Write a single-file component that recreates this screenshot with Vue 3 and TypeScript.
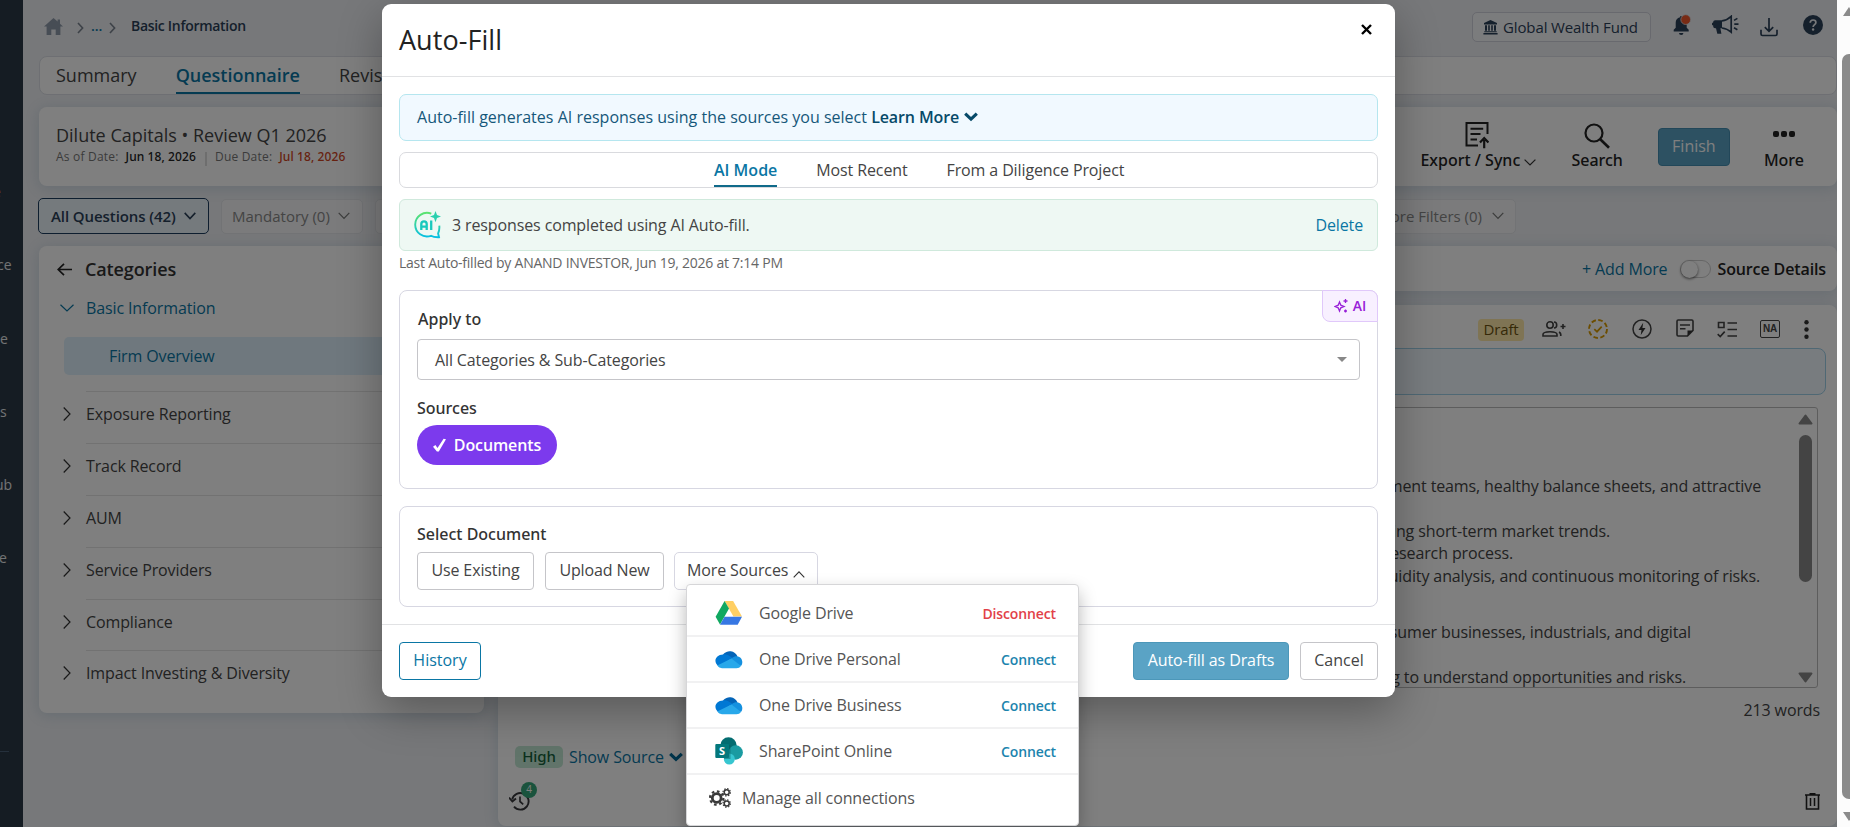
<script setup lang="ts">
interface Source {
  name: string
  icon: 'gdrive' | 'onedrive' | 'sharepoint'
  action: string
}

interface EditorLine {
  text: string
  top: number
  right: number
}

const railLabels: { text: string; top: number; left: number }[] = [
  { text: 'e', top: 182, left: -7 },
  { text: 'ce', top: 255, left: -3 },
  { text: 'e', top: 329, left: 0 },
  { text: 's', top: 402, left: 0 },
  { text: 'ub', top: 475, left: -5 },
  { text: 'e', top: 548, left: -1 },
]

const categories: string[] = [
  'Exposure Reporting',
  'Track Record',
  'AUM',
  'Service Providers',
  'Compliance',
  'Impact Investing & Diversity',
]

const editorLines: EditorLine[] = [
  { text: 'ment teams, healthy balance sheets, and attractive', top: 67, right: 56 },
  { text: 'ing short-term market trends.', top: 22, right: 207 },
  { text: 'research process.', top: 0, right: 304 },
  { text: 'uidity analysis, and continuous monitoring of risks.', top: 0, right: 57 },
  { text: 'sumer businesses, industrials, and digital', top: 33, right: 126 },
  { text: 'g to understand opportunities and risks.', top: 23, right: 131 },
]

const modes: string[] = ['AI Mode', 'Most Recent', 'From a Diligence Project']

const sources: Source[] = [
  { name: 'Google Drive', icon: 'gdrive', action: 'Disconnect' },
  { name: 'One Drive Personal', icon: 'onedrive', action: 'Connect' },
  { name: 'One Drive Business', icon: 'onedrive', action: 'Connect' },
  { name: 'SharePoint Online', icon: 'sharepoint', action: 'Connect' },
]
</script>

<template>
  <div class="app">
    <nav class="rail">
      <span
        v-for="(label, i) in railLabels"
        :key="i"
        class="rail-label"
        :class="{ hot: i === 0 }"
        :style="{ top: label.top + 'px', left: label.left + 'px' }"
      >{{ label.text }}</span>
      <i class="rail-line"></i>
    </nav>

    <main class="page">
      <header class="topbar">
        <div class="crumbs">
          <svg class="home" width="19" height="17" viewBox="0 0 19 17"><path d="M9.5 0 0 8.6h2.6V17h4.7v-5.6h4.4V17h4.7V8.6H19l-3-2.8V1.6h-2.4v2z" fill="#8f9bab" /></svg>
          <svg class="c1" width="7" height="12" viewBox="0 0 7 12"><path d="M1 1l4.6 5L1 11" class="crumb-arrow" /></svg>
          <span class="dots">...</span>
          <svg class="c2" width="7" height="12" viewBox="0 0 7 12"><path d="M1 1l4.6 5L1 11" class="crumb-arrow" /></svg>
          <span class="here">Basic Information</span>
        </div>
        <div class="tools">
          <div class="fund">
            <svg width="15" height="15" viewBox="0 0 15 15"><path d="M7.5 0 14 3v1.4H1V3zM2 5.2h2v5.6H2zM5.2 5.2h1.6v5.6H5.2zM8.2 5.2h1.6v5.6H8.2zM11 5.2h2v5.6h-2zM1.3 11.3h12.4v1H1.3zM.4 12.9h14.2v1.5H.4z" fill="#2b4058" /></svg>
            <span>Global Wealth Fund</span>
          </div>
          <svg class="bell" width="20" height="22" viewBox="0 0 20 22"><path d="M1.7 17.5v-1.8l2-2V8.8A5.6 5.6 0 0 1 8 3.3V2.2h2.4v1.1a5.6 5.6 0 0 1 4.3 5.5v4.9l2 2v1.8zM7 19h4.4a2.2 2 0 0 1-4.4 0z" fill="#2b4058" /><circle cx="13.7" cy="5.6" r="4.9" fill="#f0562b" stroke="#dfe2e8" stroke-width=".8" /></svg>
          <svg class="horn" width="27" height="20" viewBox="0 0 27 20"><path d="M1.2 7.2c0-1.3.8-2 2-2H10v8H8.4l1 5.6H5.3L4 13.2h-.8c-1.2 0-2-.7-2-2v-.6L0 10V8.300z" fill="#2b4058" /><path d="M10 5.8c3.600-.4 6.500-1.900 9.200-4.500v15.800c-2.700-2.400-5.600-3.700-9.200-4.100" fill="none" stroke="#2b4058" stroke-width="1.700" /><path d="M22 5.400l3.400-2M22.300 9.100h4.200M22 12.800l3.400 2" fill="none" stroke="#2b4058" stroke-width="1.600" /></svg>
          <svg class="load" width="18" height="19" viewBox="0 0 18 19"><path d="M1 11.800v4.200c0 1 .5 1.500 1.500 1.500h13c1 0 1.500-.5 1.500-1.500v-4.200M9 0v13M4.800 9.200 9 13.300l4.200-4.100" fill="none" stroke="#2b4058" stroke-width="1.700" /></svg>
          <svg class="help" width="20" height="20" viewBox="0 0 20 20"><circle cx="10" cy="10" r="10" fill="#2b4058" /><path d="M7.200 7.700c.1-1.700 1.200-2.700 2.900-2.700s2.800.9 2.800 2.400c0 2.200-2.800 2.200-2.800 4.600" fill="none" stroke="#eef0f4" stroke-width="1.700" /><circle cx="10.100" cy="14.500" r="1.200" fill="#eef0f4" /></svg>
        </div>
      </header>

      <div class="tabs">
        <span class="tab">Summary</span>
        <span class="tab active">Questionnaire</span>
        <span class="tab">Revis</span>
      </div>

      <section class="project card">
        <div class="project-info">
          <div class="project-title">Dilute Capitals • Review Q1 2026</div>
          <div class="dates">
            <span>As of Date:</span><b>Jun 18, 2026</b><i></i><span>Due Date:</span><b class="due">Jul 18, 2026</b>
          </div>
        </div>
        <div class="actions">
          <div class="action export">
            <svg width="24" height="27" viewBox="0 0 24 27"><path d="M22.500 12V1.100H1.500v22.400H13M5.500 6.800h12.700M5.500 12h10M5.500 17.400h6.500" fill="none" stroke="#222" stroke-width="2" /><path d="M19.200 26.300V18M15 20.500l4.200-4.500 4.200 4.500" fill="none" stroke="#222" stroke-width="2.200" /></svg>
            <span>Export / Sync <svg width="12" height="7" viewBox="0 0 12 7"><path d="M.6.6 6 6 11.400.6" fill="none" stroke="#333" stroke-width="1.200" /></svg></span>
          </div>
          <div class="action search">
            <svg width="26" height="26" viewBox="0 0 26 26"><circle cx="10" cy="10" r="8.500" fill="none" stroke="#222" stroke-width="2.200" /><path d="M16 16l9 8.800" stroke="#222" stroke-width="2.600" /></svg>
            <span>Search</span>
          </div>
          <button class="finish">Finish</button>
          <div class="action more">
            <svg width="22" height="6" viewBox="0 0 22 6"><rect width="6" height="6" rx="2" /><rect x="8" width="6" height="6" rx="2" /><rect x="16" width="6" height="6" rx="2" /></svg>
            <span>More</span>
          </div>
        </div>
      </section>

      <div class="filters">
        <div class="filter selected">All Questions (42)<svg width="12" height="8" viewBox="0 0 12 8"><path d="M.7.9 6 6.500 11.300.9" /></svg></div>
        <div class="filter mandatory">Mandatory (0)<svg width="12" height="8" viewBox="0 0 12 8"><path d="M.7.9 6 6.500 11.300.9" /></svg></div>
        <div class="filter wide">ore Filters (0)<svg width="12" height="8" viewBox="0 0 12 8"><path d="M.7.9 6 6.500 11.300.9" /></svg></div>
      </div>

      <div class="columns">
        <aside class="card categories">
          <div class="cat-head">
            <svg width="15" height="13" viewBox="0 0 15 13"><path d="M7 .8 1.200 6.500 7 12.200M1.200 6.500H15" fill="none" stroke="#222" stroke-width="1.700" /></svg>
            Categories
          </div>
          <div class="cat-open">
            <svg width="14" height="8" viewBox="0 0 14 8"><path d="M.5.700 7 7 13.500.7" fill="none" stroke="#0a76a4" stroke-width="1.200" /></svg>
            Basic Information
          </div>
          <div class="cat-sub">Firm Overview</div>
          <div v-for="c in categories" :key="c" class="cat-row">
            <svg width="8" height="14" viewBox="0 0 8 14"><path d="M.7.500 7 7 .7 13.500" fill="none" stroke="#333" stroke-width="1.200" /></svg>
            <div class="cat-name">{{ c }}</div>
          </div>
        </aside>

        <div class="answers">
          <div class="card addbar">
            <span class="add">+ Add More</span>
            <span class="toggle"><i></i></span>
            <b>Source Details</b>
          </div>
          <div class="card question">
            <div class="q-tools">
              <span class="draft">Draft</span>
              <svg class="people" width="24" height="17" viewBox="0 0 24 17"><g fill="none" stroke="#444" stroke-width="1.600"><circle cx="8" cy="4" r="3.200" /><path d="M12 1c3.600 0 3.600 6 0 6M1 15v-1.500C1 9.800 15 9.800 15 13.500V15zM17 11c1.800.8 2 2 1.800 4M18.500 5.500h5M21 3v5" /></g></svg>
              <svg class="status" width="20" height="20" viewBox="0 0 20 20"><circle cx="10" cy="10" r="9" fill="none" stroke="#d99b00" stroke-width="1.900" stroke-dasharray="4.600 2.470" /><path d="M6.300 10.200 9 12.700l4.700-5" fill="none" stroke="#d99b00" stroke-width="1.700" /></svg>
              <svg class="bolt" width="20" height="20" viewBox="0 0 20 20"><circle cx="10" cy="10" r="9" fill="none" stroke="#444" stroke-width="1.500" /><path d="M11.200 3.800 6.500 11h3l-.8 5.300L13.500 9h-3.100z" fill="#333" /></svg>
              <svg class="note" width="18" height="18" viewBox="0 0 18 18"><path d="M11.500 17H2.200Q1 17 1 15.800V2.200Q1 1 2.200 1h13.600Q17 1 17 2.200v9.300z" fill="none" stroke="#444" stroke-width="1.600" /><path d="M4 6h10M4 9.700h5.500" stroke="#444" stroke-width="1.600" /><path d="M11.500 17v-5.500H17z" fill="#333" /></svg>
              <svg class="checks" width="20" height="17" viewBox="0 0 20 17"><path d="M1.500 1.500H7v5H1.500zM10.500 2H20M10.500 8.500H20M10.500 15H20M.7 13.200l2.500 2.400 4.500-5" fill="none" stroke="#444" stroke-width="1.600" /></svg>
              <span class="na">NA</span>
              <svg class="kebab" width="5" height="19" viewBox="0 0 5 19"><circle cx="2.500" cy="2.300" r="2.200" /><circle cx="2.500" cy="9.500" r="2.200" /><circle cx="2.500" cy="16.700" r="2.200" /></svg>
            </div>
            <div class="prompt"></div>
            <div class="editor">
              <div class="editor-text">
                <div
                  v-for="line in editorLines"
                  :key="line.text"
                  class="line"
                  :style="{ marginTop: line.top + 'px', marginRight: line.right + 'px' }"
                >{{ line.text }}</div>
              </div>
              <div class="scroll">
                <svg width="15" height="11" viewBox="0 0 15 11"><path d="M7.500 1.500 13.500 9.500H1.500z" class="tri" /></svg>
                <i></i>
                <svg class="down" width="15" height="11" viewBox="0 0 15 11"><path d="M7.500 9.500 13.500 1.500H1.500z" class="tri" /></svg>
              </div>
            </div>
            <div class="words">213 words</div>
            <div class="source-row">
              <span class="high">High</span>
              <span class="show">Show Source</span>
              <svg width="14" height="10" viewBox="0 0 14 10"><path d="M1.200 1.800 7 7.400l5.800-5.600" fill="none" stroke="#006a99" stroke-width="3.200" /></svg>
            </div>
            <div class="bottom-row">
              <span class="history-icon">
                <svg width="21" height="20" viewBox="0 0 21 20"><path d="M3.200 8.500A8.300 8.300 0 1 1 5 15.700" fill="none" stroke="#38383c" stroke-width="1.900" /><path d="M0 6.600 3.400 10.500 7 7.500" fill="none" stroke="#38383c" stroke-width="1.900" /><path d="M11 5.500v5l3.200 2.800" fill="none" stroke="#38383c" stroke-width="1.700" /></svg>
                <em>4</em>
              </span>
              <svg width="15" height="17" viewBox="0 0 15 17"><path d="M0 2h15M1.500 2v14h12V2M4.500.800h6" fill="none" stroke="#222" stroke-width="1.600" /><path d="M5.500 5v8M9.500 5v8" stroke="#222" stroke-width="1.500" /></svg>
            </div>
          </div>
        </div>
      </div>
    </main>

    <div class="backdrop">
      <div class="modal">
        <header class="modal-head">
          <h1>Auto-Fill</h1>
          <svg width="11" height="11" viewBox="0 0 11 11"><path d="M1 1l9 9M10 1l-9 9" stroke="#000" stroke-width="2.400" /></svg>
        </header>
        <div class="modal-body">
          <div class="info">Auto-fill generates AI responses using the sources you select <b>Learn More</b>
            <svg width="14" height="10" viewBox="0 0 14 10"><path d="M1.200 1.600 7 7.200l5.800-5.600" fill="none" stroke="#074a69" stroke-width="3.100" /></svg>
          </div>
          <div class="modes">
            <span v-for="(m, i) in modes" :key="m" :class="{ on: i === 0 }">{{ m }}</span>
          </div>
          <div class="done">
            <svg width="27" height="28" viewBox="0 0 27 28">
              <defs><linearGradient id="aiGrad" x1="0" y1="0" x2="0" y2="1" gradientUnits="objectBoundingBox"><stop offset="0" stop-color="#5be36f" /><stop offset="1" stop-color="#06bfe3" /></linearGradient></defs>
              <path d="M17.300 2.700A11.800 11.800 0 1 0 17 24.800c2 1.200 4.500 1.500 8 1.400l-.9-3.800c1-2 1.500-4.500 1.200-7.700" fill="none" stroke="url(#aiGrad)" stroke-width="1.900" />
              <path d="M7.300 19V13q0-2.700 2.700-2.700t2.700 2.700v6M7.300 15.600h5.400M17.200 9.500V19" fill="none" stroke="#17c9bd" stroke-width="2.300" />
              <path d="M21.500 0l1.500 3.900 4 1.600-4 1.600-1.500 4.100L20 7.100l-4-1.600 4-1.600z" fill="#2ad0ae" />
            </svg>
            <span>3 responses completed using AI Auto-fill.</span>
            <a>Delete</a>
          </div>
          <div class="last">Last Auto-filled by ANAND INVESTOR, Jun 19, 2026 at 7:14 PM</div>

          <section class="box apply">
            <div class="ai-badge">
              <svg width="14" height="14" viewBox="0 0 14 14"><path d="M5.500 3 6.800 6.200 10 7.500 6.800 8.800 5.500 12 4.200 8.800 1 7.500 4.200 6.200zM11.500 0v4M9.500 2h4M11.500 10.500v3M10 12h3" fill="none" stroke="#9820d8" stroke-width="1.300" /></svg>AI
            </div>
            <label class="apply-label">Apply to</label>
            <div class="select">All Categories &amp; Sub-Categories<i></i></div>
            <label>Sources</label>
            <span class="pill"><svg width="13" height="14" viewBox="0 0 13 14"><path d="M0 8.800 2.400 7l2.100 3L10.600.8 13 1.200 5.800 13.400H3.900z" fill="#fff" /></svg>Documents</span>
          </section>

          <section class="box pick">
            <label>Select Document</label>
            <div class="btns">
              <button>Use Existing</button>
              <button>Upload New</button>
              <div class="more-sources">
                More Sources <svg width="12" height="7" viewBox="0 0 12 7"><path d="M.7 6.300 6 .9l5.300 5.400" fill="none" stroke="#333" stroke-width="1.100" /></svg>
                <div class="menu">
                  <div v-for="s in sources" :key="s.name" class="menu-row">
                    <svg v-if="s.icon === 'gdrive'" width="28" height="26" viewBox="0 0 28 26"><path d="M9.600 1h8.500L27 16.400h-8.600z" fill="#ffcf63" /><path d="M9.600 1 14 8.500 5 24.500.6 16.800z" fill="#11a861" /><path d="M9.500 16.700H27l-4.300 8H5z" fill="#3777e3" /></svg>
                    <svg v-else-if="s.icon === 'onedrive'" width="28" height="20" viewBox="0 0 28 20"><path d="M8 5.500a8.500 8.500 0 0 1 14.500 2L17 12z" fill="#0364b8" /><path d="M8 5.500C11 4.800 14 6.600 17.500 9L4 17.500C-2.500 13 .5 5.800 8 5.500z" fill="#0078d4" /><path d="M17 9c3-2.500 7.500-2.400 9.500 1 1.500 3 .8 5.500-.5 7L13 12z" fill="#1490df" /><path d="M16.500 9.500 26 17q-1.500 2.200-4.500 2.300H7Q4 19 2.200 16.600z" fill="#28a8ea" /></svg>
                    <svg v-else width="28" height="28" viewBox="0 0 28 28"><circle cx="13.500" cy="8.500" r="8.200" fill="#036c70" /><circle cx="20.700" cy="15.500" r="7.200" fill="#1a9ba1" /><circle cx="14.300" cy="22" r="5.500" fill="#37c6d0" /><rect x="9" y="8" width="6.500" height="14" fill="#045b5f" opacity=".45" /><rect x=".3" y="7" width="13.700" height="14" rx="1" fill="#03787c" /><text x="7" y="18.200" class="sp">S</text></svg>
                    <span>{{ s.name }}</span>
                    <a :class="{ off: s.action === 'Disconnect' }">{{ s.action }}</a>
                  </div>
                  <div class="menu-row manage">
                    <svg width="22" height="20" viewBox="0 0 22 20"><g fill="none" stroke="#3a3a3a"><circle cx="7.700" cy="10" r="4.400" stroke-width="2.800" /><circle cx="7.700" cy="10" r="6.700" stroke-width="2.200" stroke-dasharray="2.630 2.630" /><circle cx="17.700" cy="4.300" r="2.500" stroke-width="1.500" /><circle cx="17.700" cy="4.300" r="3.700" stroke-width="1.200" stroke-dasharray="1.450 1.450" /><circle cx="17.700" cy="15.500" r="2.500" stroke-width="1.500" /><circle cx="17.700" cy="15.500" r="3.700" stroke-width="1.200" stroke-dasharray="1.450 1.450" /></g></svg>
                    <span>Manage all connections</span>
                  </div>
                </div>
              </div>
            </div>
          </section>
        </div>
        <footer class="modal-foot">
          <button class="hist">History</button>
          <button class="primary">Auto-fill as Drafts</button>
          <button>Cancel</button>
        </footer>
      </div>
    </div>

    <div class="page-scroll">
      <svg width="13" height="11" viewBox="0 0 13 11"><path d="M12 0 18 9H6z" class="ptri" /></svg>
      <i></i>
      <svg width="13" height="11" viewBox="0 0 13 11"><path d="M12 10 18 1H6z" class="ptri" /></svg>
    </div>
  </div>
</template>

<style>
html,
body {
  margin: 0;
  overflow: hidden;
}
</style>

<style scoped>
* {
  box-sizing: border-box;
}
.app {
  display: flex;
  width: 1850px;
  height: 827px;
  overflow: hidden;
  position: relative;
  background: #eef0f4;
  font-family: 'Open Sans', 'Noto Sans', sans-serif;
  font-size: 16px;
  line-height: 22px;
  letter-spacing: -0.12px;
  color: #444;
}
svg {
  flex: none;
  display: block;
}
.rail {
  position: relative;
  width: 23px;
  flex: none;
  background: #2a3846;
  overflow: hidden;
}
.rail-label {
  position: absolute;
  font-size: 14px;
  line-height: 20px;
  letter-spacing: 0;
  color: #e4e6e8;
}
.rail-label.hot {
  color: #e5a03c;
}
.rail-line {
  position: absolute;
  top: 751px;
  left: 0;
  width: 9px;
  height: 1px;
  background: #4a6078;
}
.page {
  width: 1814px;
  flex: none;
  padding-left: 16px;
  display: flex;
  flex-direction: column;
}
.topbar {
  height: 56px;
  flex: none;
  display: flex;
  justify-content: space-between;
}
.crumbs {
  display: flex;
  padding: 18px 0 0 5px;
  align-items: flex-start;
  line-height: 16px;
}
.crumb-arrow {
  fill: none;
  stroke: #7b8490;
  stroke-width: 1.6;
}
.c1 {
  margin: 4px 7px 0 14px;
}
.c2 {
  margin: 4px 0 0 7px;
}
.dots {
  width: 11px;
  font-size: 14px;
  color: #0a76a4;
  font-weight: 600;
}
.here {
  margin-left: 15px;
  font-size: 14px;
  font-weight: 600;
  letter-spacing: -0.3px;
  color: #2b4058;
}
.tools {
  display: flex;
  align-items: flex-start;
  padding-right: 14px;
}
.fund {
  margin-top: 12px;
  width: 179px;
  height: 30px;
  border: 1px solid #d0d2dc;
  border-radius: 5px;
  background: #f7f8fa;
  display: flex;
  align-items: center;
  padding-left: 10px;
  gap: 5px;
  font-size: 15px;
  color: #2b4058;
  white-space: nowrap;
}
.bell {
  margin: 14px 0 0 21px;
}
.horn {
  margin: 15px 0 0 20px;
}
.load {
  margin: 18px 0 0 21px;
}
.help {
  margin: 15px 0 0 25px;
}
.tabs {
  height: 39px;
  flex: none;
  background: #fff;
  border: 1px solid #dcdfe6;
  border-radius: 8px;
  display: flex;
  padding-left: 16px;
  font-size: 18px;
  line-height: 37px;
  letter-spacing: 0;
}
.tab {
  margin-right: 39px;
}
.tab.active {
  color: #0a76a4;
  font-weight: 600;
  border-bottom: 2px solid #0a76a4;
}
.card {
  background: #fff;
  border-radius: 8px;
  box-shadow: 0 2px 14px rgba(80, 130, 165, 0.22);
}
.project {
  margin-top: 12px;
  height: 79px;
  flex: none;
  display: flex;
  justify-content: space-between;
}
.project-info {
  padding: 16px 0 0 17px;
}
.project-title {
  font-size: 18px;
  line-height: 25px;
  letter-spacing: 0;
}
.dates {
  display: flex;
  font-size: 12px;
  line-height: 18px;
  color: #777;
  letter-spacing: 0.2px;
}
.dates b {
  font-weight: 500;
  font-family: 'Noto Sans', sans-serif;
  letter-spacing: 0.1px;
  color: #222;
  margin-left: 7px;
}
.dates b.due {
  color: #cf4421;
}
.dates i {
  width: 2px;
  height: 14px;
  margin: 4px 8px 0 9px;
  background: #ddd;
}
.actions {
  display: flex;
  color: #222;
  font-weight: 500;
  font-family: 'Noto Sans', sans-serif;
  letter-spacing: 0;
}
.action {
  display: flex;
  flex-direction: column;
  align-items: center;
  white-space: nowrap;
}
.action span {
  position: relative;
}
.export {
  margin-right: 35px;
  padding-top: 15px;
}
.export > svg {
  margin-left: -2px;
}
.export span svg {
  display: inline-block;
}
.search {
  padding-top: 16px;
  margin-right: 35px;
}
.finish {
  margin-top: 21px;
  width: 72px;
  height: 38px;
  border: 1px solid #458fb2;
  border-radius: 4px;
  background: #5aa3c5;
  color: #fff;
  font-family: 'Open Sans', sans-serif;
  font-weight: 400;
  margin-right: 34px;
}
.more {
  padding-top: 24px;
  margin-right: 33px;
}
.more svg {
  margin-bottom: 12px;
  fill: #222;
}
.filters {
  margin-top: 12px;
  height: 36px;
  flex: none;
  display: flex;
  align-items: center;
  font-size: 15px;
  letter-spacing: 0;
}
.filter {
  height: 35px;
  border: 1px solid #e4e6ea;
  border-radius: 5px;
  background: #f6f7f8;
  display: flex;
  align-items: center;
  justify-content: space-between;
  padding: 0 12px 0 10px;
  color: #888;
  white-space: nowrap;
  margin-right: 12px;
}
.filter path {
  fill: none;
  stroke: #777;
  stroke-width: 1.2;
}
.filter.selected {
  margin-left: -1px;
  width: 171px;
  height: 36px;
  padding-left: 12px;
  border-color: #1d3c5e;
  background: #eaf5fb;
  color: #2b4058;
  font-weight: 600;
  letter-spacing: -0.08px;
}
.filter.selected path {
  stroke: #2b4058;
  stroke-width: 1.6;
}
.mandatory {
  width: 142px;
}
.wide {
  width: 1141px;
  justify-content: flex-end;
  gap: 10px;
  padding-right: 11px;
}
.columns {
  flex: 1;
  margin-top: 12px;
  display: flex;
  gap: 14px;
  min-height: 0;
}
.categories {
  width: 445px;
  height: 467px;
}
.cat-head {
  display: flex;
  align-items: center;
  gap: 13px;
  padding: 11px 0 0 18px;
  font-size: 18px;
  font-weight: 600;
  color: #333;
  line-height: 24px;
}
.cat-open {
  display: flex;
  align-items: center;
  gap: 12px;
  margin-top: 16px;
  padding-left: 21px;
  color: #0a76a4;
}
.cat-sub {
  margin: 18px 15px 16px 25px;
  height: 38px;
  line-height: 38px;
  padding-left: 45px;
  border-radius: 5px;
  background: #dff1fc;
  color: #0a76a4;
}
.cat-row {
  display: flex;
  gap: 15px;
  margin-left: 24px;
  height: 51.9px;
  align-items: center;
}
.cat-name {
  flex: 1;
  height: 100%;
  line-height: 45px;
  border-top: 1px solid #e4e4e4;
}
.cat-row svg {
  margin-top: -6px;
}
.answers {
  flex: 1;
  display: flex;
  flex-direction: column;
}
.addbar {
  height: 45px;
  flex: none;
  display: flex;
  align-items: center;
  justify-content: flex-end;
  padding-right: 11px;
  white-space: nowrap;
  color: #222;
}
.addbar b {
  font-weight: 600;
}
.add {
  color: #0a76a4;
}
.toggle {
  width: 31px;
  height: 18px;
  border: 1px solid #ccc;
  border-radius: 9px;
  margin: 0 6px 0 13px;
}
.toggle i {
  display: block;
  width: 17px;
  height: 17px;
  border-radius: 50%;
  background: #fff;
  box-shadow: 0 1px 3px rgba(0, 0, 0, 0.6);
}
.question {
  margin-top: 14px;
  height: 521px;
  flex: none;
}
.q-tools {
  height: 43px;
  display: flex;
  justify-content: flex-end;
  align-items: center;
  padding: 5px 28px 0 0;
}
.draft {
  width: 46px;
  height: 22px;
  line-height: 21px;
  margin-top: 1px;
  text-align: center;
  border-radius: 4px;
  background: #ffe9a8;
  color: #6c5310;
  font-size: 15px;
}
.people {
  margin-left: 18px;
}
.status {
  margin-left: 22px;
}
.bolt {
  margin-left: 24px;
}
.note {
  margin-left: 24px;
  margin-top: -2px;
}
.checks {
  margin-left: 23px;
}
.na {
  margin: -1px 0 0 23px;
  width: 20px;
  height: 18px;
  border: 1.5px solid #444;
  border-radius: 2px;
  font: 700 10px/15px 'Liberation Sans', sans-serif;
  text-align: center;
}
.kebab {
  margin-left: 24px;
  fill: #333;
}
.prompt {
  margin: 0 11px 0 16px;
  height: 47px;
  border: 1px solid #9fd0e8;
  border-radius: 8px;
  background: #f0f9ff;
}
.editor {
  margin: 12px 19px 0 16px;
  height: 281px;
  border: 1px solid #bbb;
  border-radius: 3px;
  display: flex;
  position: relative;
}
.editor-text {
  flex: 1;
}
.line {
  text-align: right;
  height: 22.7px;
  white-space: nowrap;
}
.scroll {
  position: absolute;
  right: 4px;
  top: 6px;
  bottom: 4px;
  width: 15px;
  display: flex;
  flex-direction: column;
  align-items: center;
}
.scroll i {
  margin-top: 10px;
  width: 13px;
  height: 147px;
  border-radius: 7px;
  background: #888;
}
.tri {
  fill: #888;
  stroke: #888;
  stroke-width: 2;
  stroke-linejoin: round;
}
.down {
  margin-top: auto;
}
.words {
  text-align: right;
  padding: 11px 17px 0 0;
}
.source-row {
  display: flex;
  align-items: center;
  margin: 25px 0 0 17px;
}
.high {
  width: 48px;
  height: 22px;
  border-radius: 5px;
  background: #c3e9d5;
  color: #17633c;
  font-family: 'Noto Sans', sans-serif;
  font-size: 15px;
  font-weight: 500;
  text-align: center;
  line-height: 21px;
}
.show {
  color: #0a76a4;
  margin: 0 5px 0 6px;
}
.bottom-row {
  display: flex;
  align-items: center;
  justify-content: space-between;
  padding: 23px 17px 0 11px;
}
.history-icon {
  position: relative;
}
.history-icon em {
  position: absolute;
  left: 12px;
  top: -9px;
  width: 16px;
  height: 16px;
  border-radius: 50%;
  background: #35a77a;
  color: #fff;
  font-style: normal;
  font-size: 10px;
  line-height: 15px;
  text-align: center;
}
.backdrop {
  position: absolute;
  inset: 0 13px 0 0;
  background: rgba(0, 0, 0, 0.5);
}
.modal {
  margin: 4px 0 0 382px;
  width: 1013px;
  height: 693px;
  background: #fff;
  border-radius: 9px;
  box-shadow: 0 14px 44px rgba(0, 0, 0, 0.3);
}
.modal-head {
  height: 73px;
  border-bottom: 1px solid #e1e2e4;
  display: flex;
  justify-content: space-between;
  padding: 20px 23px 0 17px;
}
h1 {
  margin: 0;
  font-size: 27px;
  line-height: 31px;
  letter-spacing: 0.05px;
  font-weight: 400;
  color: #222;
}
.modal-body {
  padding: 17px 17px 0;
}
.info {
  height: 47px;
  border: 1px solid #b5e6ef;
  border-radius: 7px;
  background: #f1f9ff;
  color: #15577a;
  display: flex;
  align-items: center;
  padding: 0 0 2px 17px;
  white-space: pre;
  letter-spacing: 0.01px;
}
.info b {
  font-weight: 600;
  letter-spacing: -0.1px;
  color: #074a69;
  margin-right: 5px;
}
.modes {
  margin-top: 11px;
  height: 36px;
  border: 1px solid #d9dade;
  border-radius: 7px;
  display: flex;
  padding-left: 314px;
  gap: 39px;
  line-height: 34px;
}
.modes .on {
  color: #0a76a4;
  font-weight: 600;
  letter-spacing: 0;
  border-bottom: 2px solid #106a8a;
}
.done {
  margin-top: 11px;
  height: 52px;
  border: 1px solid #cfe9dc;
  border-radius: 6px;
  background: #eef8f3;
  display: flex;
  align-items: center;
  padding: 0 14px;
}
.done span {
  margin-left: 11px;
}
a {
  margin-left: auto;
  color: #0a76a4;
}
.last {
  font-size: 14px;
  line-height: 20px;
  letter-spacing: -0.24px;
  margin-top: 2px;
  color: #666;
}
.box {
  position: relative;
  border: 1px solid #d7d7e2;
  border-radius: 8px;
  padding: 0 17px;
}
label {
  display: block;
  font-family: 'Noto Sans', sans-serif;
  font-weight: 500;
  letter-spacing: 0;
  color: #333;
}
.apply {
  height: 199px;
  margin-top: 17px;
  padding-top: 17px;
}
.apply-label {
  margin-left: 1px;
}
.ai-badge {
  position: absolute;
  top: -1px;
  right: -1px;
  width: 56px;
  height: 32px;
  border: 1px solid #e0c8fa;
  border-radius: 0 8px 0 8px;
  background: #f8f0ff;
  color: #9820d8;
  font-size: 14px;
  font-weight: 600;
  display: flex;
  align-items: center;
  justify-content: center;
  gap: 5px;
}
.select {
  margin: 9px 0 17px;
  height: 41px;
  border: 1px solid #c5c5c9;
  border-radius: 4px;
  display: flex;
  align-items: center;
  justify-content: space-between;
  padding: 0 12px 0 17px;
}
.select i {
  border: 5px solid transparent;
  border-top-color: #888;
  border-bottom: 0;
}
.pill {
  margin-top: 6px;
  width: 140px;
  height: 40px;
  border-radius: 20px;
  background: #7c3aed;
  color: #fff;
  font-weight: 600;
  display: flex;
  align-items: center;
  justify-content: center;
  gap: 8px;
}
.pick {
  margin-top: 17px;
  height: 101px;
  padding-top: 16px;
}
.btns {
  display: flex;
  margin-top: 7px;
  gap: 11px;
}
button {
  font: inherit;
  letter-spacing: inherit;
  height: 38px;
  padding: 0 0 2px;
  width: 117px;
  border: 1px solid #c5c5c9;
  border-radius: 4px;
  background: #fff;
  color: #444;
  white-space: nowrap;
}
.btns button + button {
  width: 119px;
}
.more-sources {
  position: relative;
  margin-left: -1px;
  width: 144px;
  height: 38px;
  border: 1px solid #d7d7e2;
  border-radius: 5px;
  padding-left: 12px;
  line-height: 35px;
  white-space: nowrap;
}
.more-sources > svg {
  display: inline-block;
  margin-left: 1px;
  margin-bottom: -2px;
}
.menu {
  position: absolute;
  left: 11px;
  top: 31px;
  width: 393px;
  height: 242px;
  border: 1px solid #d6d6d8;
  border-radius: 4px;
  background: #fff;
  box-shadow: 0 8px 18px rgba(0, 0, 0, 0.28);
  color: #555;
  padding-top: 6px;
}
.menu-row {
  height: 46px;
  border-bottom: 2px solid #f1f1f2;
  display: flex;
  align-items: center;
  padding: 0 22px 0 28px;
}
.menu-row span {
  margin-left: 16px;
}
.menu-row a {
  font-size: 14px;
  font-weight: 600;
  color: #1c84ae;
}
.menu-row a.off {
  color: #e24148;
}
.menu-row.manage {
  border: 0;
  padding-left: 22px;
}
.menu-row.manage span {
  margin-left: 11px;
}
.sp {
  font: 700 11px 'Open Sans', sans-serif;
  fill: #fff;
  text-anchor: middle;
}
.modal-foot {
  margin-top: 17px;
  border-top: 1px solid #e1e2e4;
  padding: 17px 17px 0;
  display: flex;
  letter-spacing: 0;
}
.hist {
  width: 82px;
  border-color: #0a76a4;
  color: #0a76a4;
  margin-right: auto;
}
.primary {
  width: 156px;
  background: #5aa3c5;
  border-color: #4c97b9;
  color: #fff;
  letter-spacing: -0.1px;
  margin-right: 11px;
}
.primary + button {
  width: 78px;
}
.page-scroll {
  position: absolute;
  right: 0;
  top: 0;
  width: 13px;
  height: 827px;
  background: #fcfcfc;
  overflow: hidden;
  padding: 7px 0 5px;
  display: flex;
  flex-direction: column;
  justify-content: space-between;
}
.page-scroll i {
  margin: 36px 0 auto 5px;
  width: 14px;
  height: 745px;
  border-radius: 7px;
  background: #8b8b8b;
}
.ptri {
  fill: #8b8b8b;
}
</style>
